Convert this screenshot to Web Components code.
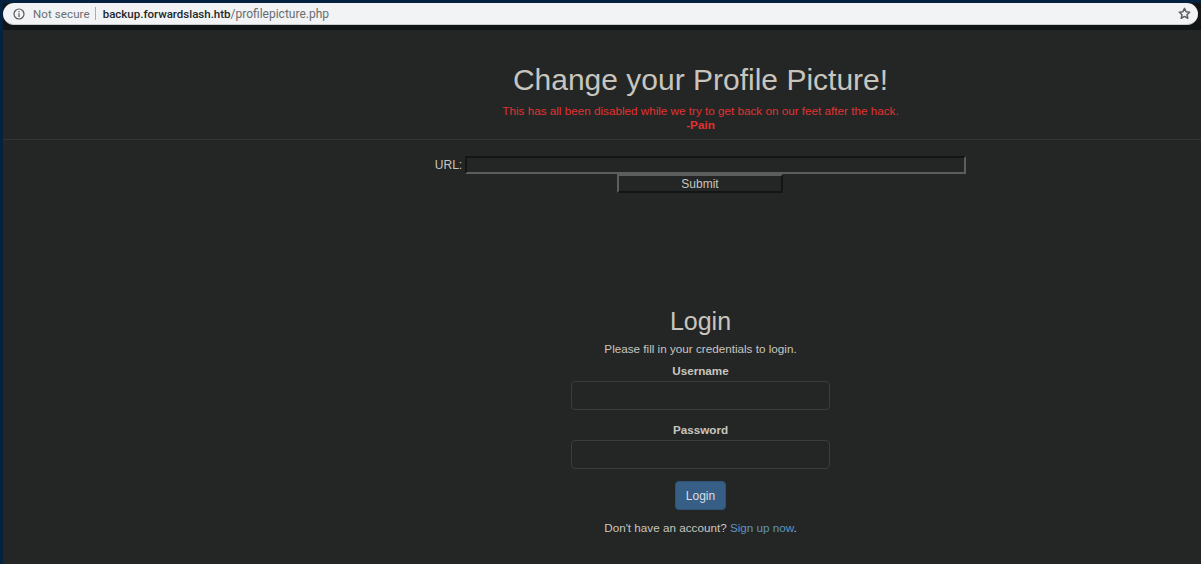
<!DOCTYPE html>
<html>
<head>
<meta charset="utf-8">
<style>
    html, body { margin: 0; height: 100%; background: #04213f; overflow: hidden; }
    body { font-family: "Liberation Sans", Arial, sans-serif; color: #c8c5bf; }
    browser-bar { position: relative; z-index: 1; }
</style>
</head>
<body>
<browser-bar secure="Not secure" host="backup.forwardslash.htb" path="/profilepicture.php"></browser-bar>
<dark-page>
    <page-header title="Change your Profile Picture!">
        This has all been disabled while we try to get back on our feet after the hack.<br><b>-Pain</b>
    </page-header>
    <url-form></url-form>
    <login-form></login-form>
</dark-page>
<script>
class BrowserBar extends HTMLElement {
    connectedCallback() {
        this.attachShadow({ mode: 'open' });
        this.shadowRoot.innerHTML = /* html */ `
        <style>
            :host { display: block; padding: 3px 0 0 3px; background: #04213f; }
            .wrap { background: #121516; padding: 0 3px 1px 0; }
            .bar {
                display: flex; align-items: center; height: 22px; box-sizing: border-box;
                background: #f1f3f4; border-radius: 11px; border-bottom: 1px solid #c9cacc;
                padding: 0 7px 0 10px; font-family: Roboto, "Noto Sans", sans-serif; font-size: 11.5px;
            }
            svg { display: block; flex: none; }
            .secure { color: #6a6d71; margin-left: 8px; letter-spacing: .1px; }
            .sep { width: 1px; height: 13px; background: #a9abae; margin: 0 7px 0 5px; }
            .host { color: #24272b; font-weight: 500; }
            .path { color: #6a6d71; font-size: 12px; }
            .star { margin-left: auto; }
        </style>
        <div class="wrap">
        <div class="bar">
            <svg width="12" height="12" viewBox="0 0 12 12" fill="none" stroke="#55585c" stroke-width="1.2">
                <circle cx="6" cy="6" r="5"/>
                <path d="M6 5.2V9M6 3v1.2"/>
            </svg>
            <span class="secure"></span>
            <span class="sep"></span>
            <span class="host"></span><span class="path"></span>
            <svg class="star" width="13" height="13" viewBox="0 0 13 13" fill="none" stroke="#5c5f63" stroke-width="1.5" stroke-linejoin="round">
                <path d="M6.5 1.4l1.6 3.4 3.6.4-2.7 2.5.8 3.6-3.3-1.9-3.3 1.9.8-3.6-2.7-2.5 3.6-.4z"/>
            </svg>
        </div>
        </div>`;
        this.shadowRoot.querySelector('.secure').textContent = this.getAttribute('secure');
        this.shadowRoot.querySelector('.host').textContent = this.getAttribute('host');
        this.shadowRoot.querySelector('.path').textContent = this.getAttribute('path');
    }
}

class DarkPage extends HTMLElement {
    connectedCallback() {
        this.attachShadow({ mode: 'open' });
        this.shadowRoot.innerHTML = /* html */ `
        <style>
            :host {
                display: block; margin: 0 0 0 3px; height: 538px; box-sizing: border-box;
                background: #242626; border-top: 4px solid #121516; overflow: hidden;
                font-size: 11.7px; line-height: 18px; color: #c8c5bf;
            }
        </style>
        <slot></slot>`;
    }
}

class PageHeader extends HTMLElement {
    connectedCallback() {
        this.attachShadow({ mode: 'open' });
        this.shadowRoot.innerHTML = /* html */ `
        <style>
            :host {
                display: block; text-align: center; color: #e03230; font-size: 11.7px; line-height: 14px;
                padding: 31px 0 7px 197px; border-bottom: 1px solid #343636;
            }
            h1 { margin: 0 0 5px; font-size: 30px; line-height: 38px; font-weight: 400; color: #c8c5bf; }
        </style>
        <h1></h1>
        <slot></slot>`;
        this.shadowRoot.querySelector('h1').textContent = this.getAttribute('title');
    }
}

class UrlForm extends HTMLElement {
    connectedCallback() {
        this.attachShadow({ mode: 'open' });
        this.shadowRoot.innerHTML = /* html */ `
        <style>
            :host { display: flex; flex-direction: column; align-items: center; padding: 16px 0 0 197px; }
            .row { display: flex; align-items: center; gap: 3px; height: 18px; }
            label { font-size: 12px; color: #c8c5bf; }
            input {
                width: 501px; height: 18px; box-sizing: border-box; padding: 0; background: #242626;
                border: 2px solid; border-color: #121516 #5c5e5e #5c5e5e #121516; margin: 0;
            }
            button {
                width: 166px; height: 19px; box-sizing: border-box; padding: 0; margin: 0 1px 0 0;
                background: #242626; color: #c8c5bf; font: 12px "Liberation Sans", Arial, sans-serif;
                border: 2px solid; border-color: #5c5e5e #121516 #121516 #5c5e5e;
            }
        </style>
        <div class="row"><label>URL:</label><input type="text"></div>
        <button type="button">Submit</button>`;
    }
}

class LoginForm extends HTMLElement {
    connectedCallback() {
        this.attachShadow({ mode: 'open' });
        this.shadowRoot.innerHTML = /* html */ `
        <style>
            :host { display: block; padding: 113px 0 0 197px; text-align: center; font-size: 11.7px; line-height: 18px; }
            .box { width: 259px; margin: 0 auto; }
            h2 { margin: 0 0 4px; font-size: 25px; line-height: 30px; font-weight: 400; }
            p { margin: 0; }
            label { display: block; font-weight: 700; margin-bottom: 1px; }
            .group { margin-top: 4px; margin-bottom: 11px; }
            input {
                display: block; width: 100%; height: 29px; box-sizing: border-box; margin: 0; padding: 0 10px;
                background: #242626; border: 1px solid #3a3d3d; border-radius: 4px;
            }
            button {
                display: block; margin: 12px auto 9px; width: 51px; height: 29px; padding: 0;
                background: #375f85; color: #d8dde2; border: 1px solid #2f5478; border-radius: 4px;
                font: 12px "Liberation Sans", Arial, sans-serif;
            }
            a { color: #5e94c0; text-decoration: none; }
        </style>
        <div class="box">
            <h2>Login</h2>
            <p>Please fill in your credentials to login.</p>
            <div class="group"><label>Username</label><input type="text"></div>
            <div class="group"><label>Password</label><input type="password"></div>
            <button type="button">Login</button>
            <p>Don't have an account? <a href="#">Sign up now</a>.</p>
        </div>`;
    }
}

customElements.define('browser-bar', BrowserBar);
customElements.define('dark-page', DarkPage);
customElements.define('page-header', PageHeader);
customElements.define('url-form', UrlForm);
customElements.define('login-form', LoginForm);
</script>
</body>
</html>
